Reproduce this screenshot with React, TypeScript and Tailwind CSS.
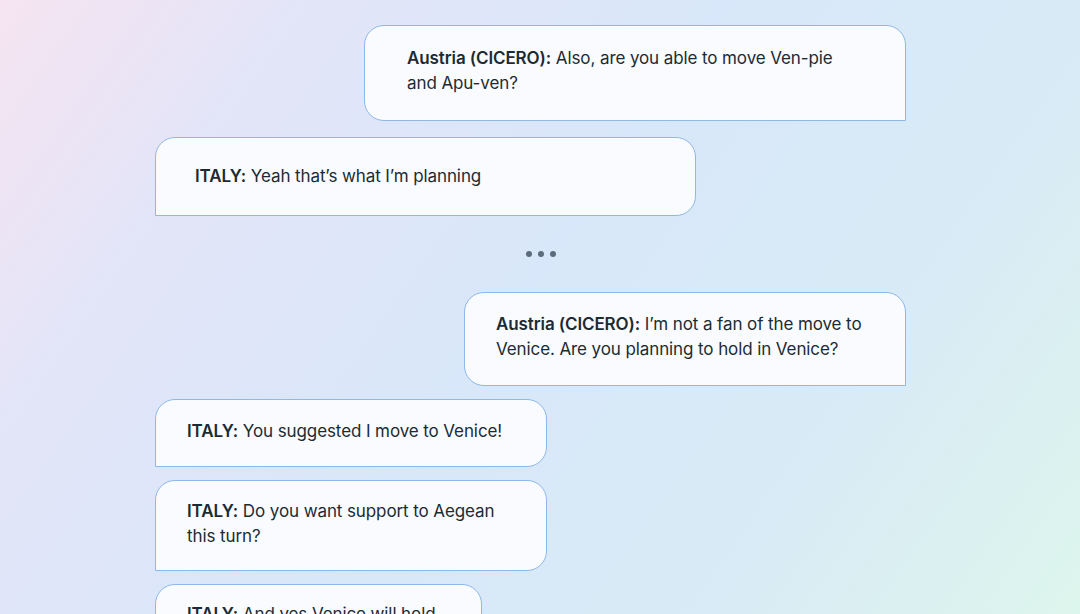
import React from "react";

type Side = "left" | "right";

interface Msg {
  who: string;
  lines: string[];
  side: Side;
  box: string;
}

const font = { fontFamily: "Inter, 'Noto Sans', sans-serif" };

function Bubble({ who, lines, side, box }: Msg) {
  return (
    <div
      className={`shrink-0 border border-[#8db8e7] bg-[#f9fbff] text-[17px] leading-[25px] tracking-[-0.1px] text-[#1c2b33] ${
        side === "right"
          ? "self-end rounded-[20px] rounded-br-none"
          : "self-start rounded-[20px] rounded-bl-none"
      } ${box}`}
    >
      <p>
        <span className="font-semibold">{who}:</span>{" "}
        {lines.map((l, i) => (
          <React.Fragment key={i}>
            {i > 0 && <br />}
            {l}
          </React.Fragment>
        ))}
      </p>
    </div>
  );
}

export default function App() {
  return (
    <div
      style={font}
      className="w-[1080px] h-[614px] overflow-hidden bg-[linear-gradient(125deg,#f6e4f1_0%,#e3e5f8_20%,#d8e7f9_48%,#d9ebf6_75%,#dcf5ec_100%)]"
    >
      <div className="flex flex-col pt-[25px] pl-[155px] pr-[174px]">
        <Bubble
          side="right"
          who="Austria (CICERO)"
          lines={["Also, are you able to move Ven-pie", "and Apu-ven?"]}
          box="w-[542px] h-[96px] pl-[42px] pt-[20px]"
        />
        <div className="mt-[16px]">
          <Bubble
            side="left"
            who="ITALY"
            lines={["Yeah that’s what I’m planning"]}
            box="w-[541px] h-[79px] pl-[39px] pt-[26px]"
          />
        </div>
        <div className="flex justify-center gap-[6px] mt-[35px] mb-[35px] ml-[20px]">
          <span className="w-[6px] h-[6px] rounded-full bg-[#5d6b7c]" />
          <span className="w-[6px] h-[6px] rounded-full bg-[#5d6b7c]" />
          <span className="w-[6px] h-[6px] rounded-full bg-[#5d6b7c]" />
        </div>
        <Bubble
          side="right"
          who="Austria (CICERO)"
          lines={["I’m not a fan of the move to", "Venice. Are you planning to hold in Venice?"]}
          box="w-[442px] h-[94px] pl-[31px] pt-[19px]"
        />
        <div className="mt-[13px] flex flex-col gap-[13px]">
          <Bubble
            side="left"
            who="ITALY"
            lines={["You suggested I move to Venice!"]}
            box="w-[392px] h-[68px] pl-[31px] pt-[19px]"
          />
          <Bubble
            side="left"
            who="ITALY"
            lines={["Do you want support to Aegean", "this turn?"]}
            box="w-[392px] h-[91px] pl-[31px] pt-[18px]"
          />
          <Bubble
            side="left"
            who="ITALY"
            lines={["And yes Venice will hold"]}
            box="w-[327px] h-[80px] pl-[31px] pt-[17px]"
          />
        </div>
      </div>
    </div>
  );
}
